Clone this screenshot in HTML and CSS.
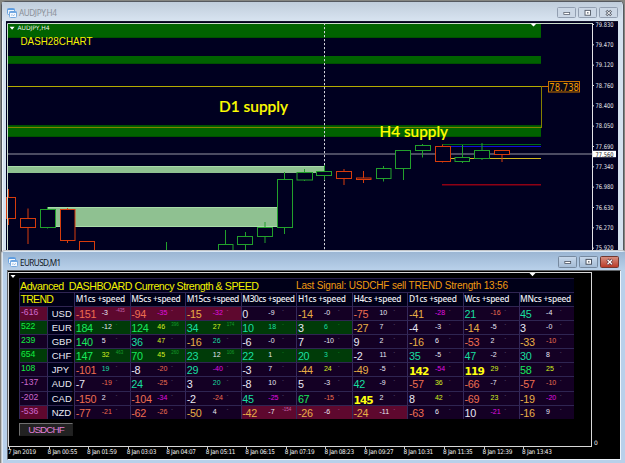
FILE: index.html
```html
<!DOCTYPE html>
<html lang="en">
<head>
<meta charset="utf-8">
<title>Charts</title>
<link rel="stylesheet" href="styles.css">
</head>
<body>
<svg width="0" height="0" class="defs">
  <symbol id="charticon" viewBox="0 0 10 10"><rect x=".5" y=".5" width="7" height="6" rx="1" fill="#eef5fd" stroke="#6aa3df"/><path d="M.5 1.3h7" stroke="#5b9be0" stroke-width="1.4"/><rect x="2.5" y="3.5" width="7" height="6" rx="1" fill="#f6faff" stroke="#78abdf"/><path d="M2.5 4.2h7" stroke="#5b9be0" stroke-width="1.3"/><path d="M4 7.5l1.2-1 1 1.2L8 6.4" fill="none" stroke="#8ab0d8" stroke-width=".8"/></symbol>
</svg>
<div class="window back">
  <header class="titlebar">
    <svg class="appicon"><use href="#charticon"/></svg><span class="caption">AUDJPY,H4</span>
    <div class="buttons">
      <b class="btn"><svg viewBox="0 0 18 10"><rect x="6" y="4.5" width="6" height="2" fill="#fff" stroke="#59616e" stroke-width=".8"/></svg></b>
      <b class="btn"><svg viewBox="0 0 18 10"><rect x="6.2" y="2.3" width="5.6" height="5" fill="#fff" stroke="#59616e"/><rect x="8.2" y="4.2" width="1.6" height="1.3" fill="#59616e"/></svg></b>
      <b class="btn"><svg viewBox="0 0 18 10"><path d="M6.5 2.5l5 5m0-5l-5 5" stroke="#59616e" stroke-width="2.6"/><path d="M6.7 2.7l4.6 4.6m0-4.6l-4.6 4.6" stroke="#fff" stroke-width="1"/></svg></b>
    </div>
  </header>
  <svg class="chart" id="chart" viewBox="6 21 612 230">
    <rect x="6" y="21" width="612" height="230" fill="#000020"/>
    <path d="M6 21.5h612" stroke="#14142c"/>
    <g fill="#006200"><rect x="8" y="24" width="533" height="13.8"/><rect x="8" y="56" width="533" height="7.5"/><rect x="8" y="125" width="533" height="11.7"/></g>
    <g fill="#005000"><rect x="8" y="37" width="533" height="1"/><rect x="8" y="63" width="533" height="1"/><rect x="8" y="125" width="533" height="1"/><rect x="8" y="136" width="533" height="1"/></g>
    <path d="M8 86.5H541" stroke="#b4ab00"/>
    <path d="M8 127.5H541.5" stroke="#858000"/><path d="M541.5 86V128" stroke="#858000"/>
    <path d="M542 86.5h6" stroke="#d07800"/>
    <path d="M8 154H592" stroke="#656579" stroke-width="1.7"/>
    <rect x="8" y="166" width="316.5" height="7" fill="#8fc191"/>
    <rect x="48" y="207" width="229" height="20" fill="#8fc191"/>
    <path d="M8 166.5H324M48 207.5H277M48 226.5H277" stroke="#a9dca9" stroke-width="1"/>
    <path d="M324.5 23V250" stroke="#d2d2da" stroke-dasharray="2.2 1.8"/>
    <path d="M442 144.5h99" stroke="#006c18"/><path d="M450 146.5h91" stroke="#1010d8"/><path d="M450 158.5h91" stroke="#d0b820"/><path d="M442 184.7h99" stroke="#8e0014" stroke-width="1.4"/>
    <g id="candles"></g>
    <path d="M7.5 250V23.5H592" fill="none" stroke="#ccdccc"/>
    <path d="M592.5 23V250" stroke="#e4e4e8"/>
    <path d="M9.6 26.8h5l-2.5 3zM530.5 23.5h6l-3 3z" fill="#fff"/>
    <text class="sym" x="17.5" y="30.3" textLength="32">AUDJPY,H4</text>
    <text class="dash" x="20.5" y="45.2" textLength="72" lengthAdjust="spacingAndGlyphs">DASH28CHART</text>
    <text class="zone" x="219" y="111.5" textLength="69" lengthAdjust="spacingAndGlyphs">D1 supply</text>
    <text class="zone" x="379.5" y="137" textLength="68.5" lengthAdjust="spacingAndGlyphs">H4 supply</text>
    <rect x="548.5" y="81.5" width="31" height="10.5" fill="#080818" stroke="#c47000"/>
    <text class="tag" x="549.3" y="91" textLength="29.6" lengthAdjust="spacingAndGlyphs">78.738</text>
    <g id="scale"></g>
    <rect x="593" y="150.8" width="23" height="6.4" fill="#fff"/><text class="ax now" x="595.5" y="156.5" textLength="18" lengthAdjust="spacingAndGlyphs">77.560</text>
  </svg>
</div>
<div class="window front">
  <header class="titlebar">
    <svg class="appicon"><use href="#charticon"/></svg><span class="caption">EURUSD,M1</span>
    <div class="buttons">
      <b class="btn"><svg viewBox="0 0 18 10"><rect x="6" y="4.5" width="6" height="2" fill="#fff" stroke="#464e5c" stroke-width=".8"/></svg></b>
      <b class="btn"><svg viewBox="0 0 18 10"><rect x="6.2" y="2.3" width="5.6" height="5" fill="#fff" stroke="#464e5c"/><rect x="8.2" y="4.2" width="1.6" height="1.3" fill="#464e5c"/></svg></b>
      <b class="btn close"><svg viewBox="0 0 18 10"><path d="M6.5 2.5l5 5m0-5l-5 5" stroke="#60333a" stroke-width="2.8"/><path d="M6.7 2.7l4.6 4.6m0-4.6l-4.6 4.6" stroke="#fff" stroke-width="1.3"/></svg></b>
    </div>
  </header>
  <main class="panel">
    <div class="plot">
      <svg class="marks" viewBox="0 0 584 5"><path d="M1.5 2h5l-2.5 3zM520.5 0h6l-3 3.2z" fill="#fff"/></svg>
      <div class="board">
        <div class="headline"><span class="name">Advanced &nbsp;DASHBOARD Currency Strength &amp; SPEED</span><span class="signal">Last Signal: USDCHF sell TREND Strength 13:56</span></div>
        <div class="grid" id="grid"></div>
      </div>
      <button class="pair">USDCHF</button>
    </div>
    <div class="zero">0</div>
    <div class="times" id="times"></div>
  </main>
</div>
<script src="script.js"></script>
</body>
</html>
```
FILE: styles.css
```css
*{box-sizing:border-box}
body{margin:0;width:625px;height:463px;overflow:hidden;position:relative;background:#858580;font-family:"Liberation Sans",sans-serif}
.defs{position:absolute}
.window{position:absolute;border:1px solid #55595f;display:flex;flex-direction:column}
.back{left:1px;top:1px;width:623px;height:260px;border-radius:4px 4px 0 0;background:#d5e2f0;padding:0 5px 0 4px;box-shadow:inset 1px 1px #f2f6fa}
.front{left:1px;top:250px;width:625px;height:216px;border-color:#c4c6c8;border-right:0;border-radius:4px 4px 0 0;background:#b8d0ea;padding:0 5px 0 5px;box-shadow:inset 1px 1px #dce9f6}
.titlebar{display:flex;align-items:center;flex:none}
.back .titlebar{height:19px;margin:0 -4px;padding:2px 4px 0 5px;background:linear-gradient(#c0cddb,#d8e4f1)}
.front .titlebar{height:18px;margin:1px -4px 0;padding:2px 6px 0 5px;background:linear-gradient(#9bb6d3,#b9d1ea)}
.appicon{width:10px;height:10px;margin-right:2px}
.caption{font:8.2px "Noto Sans",sans-serif;color:#8b9199;letter-spacing:-.45px}
.front .caption{color:#10161f;letter-spacing:-.6px}
.buttons{margin-left:auto;display:flex;gap:1.5px}
.btn{width:19.5px;height:11.5px;border:1px solid #929fb1;border-radius:1.5px;background:#cbd7e5;display:flex;align-items:center;justify-content:center}
.btn svg{width:17.5px;height:10px;flex:none}
.front .btn{background:linear-gradient(#c6d7ea,#a5bcd6);border-color:#76899f}
.front .btn.close{background:linear-gradient(#d58e80,#bb3c29);border-color:#72372f}
.chart{width:612px;height:230px;display:block;flex:none}
.dash{font-size:11px;fill:#f3f300}
.sym{font:6px "DejaVu Sans",sans-serif;fill:#e8f4e8}
.zone{font:500 15.8px Lato,sans-serif;fill:#ffff00;stroke:#ffff00;stroke-width:.2px}
.tag{font:10.5px "DejaVu Sans",sans-serif;fill:#f09800}
.ax{font:6.5px "DejaVu Sans",sans-serif;fill:#e4e4ea}
.ax.now{fill:#222}
.panel{flex:none;height:190px;background:#000;border:1px solid #606468;border-right-color:#eef4fa;border-bottom-color:#eef4fa;display:grid;grid-template-columns:584px 1fr;grid-template-rows:176px 1fr}
.plot{border:1px solid #d8d8d8;margin-top:1px}
.marks{display:block;width:584px;height:5px}
.board{margin-left:10px;width:555px}
.headline{height:14px;display:flex;background:#000018;border-top:1px solid #251e46;border-left:1px solid #251e46;white-space:nowrap;align-items:center}
.name{color:#f2f200;width:276px;font-size:10.7px;letter-spacing:-.48px}
.signal{color:#f09a10;font-size:10px;letter-spacing:-.18px}
.grid{display:grid;grid-template-columns:27.7px 27.5px repeat(9,55.55px);grid-template-rows:14px repeat(8,14.1px)}
.cell,.head,.trend,.cur{border-top:1px solid #2f2552;border-left:1px solid #34285a;background:#140024;white-space:nowrap;overflow:hidden}
.head{background:#000018;color:#eeeef2;font:500 8.4px/12px "Noto Sans",sans-serif;padding-left:.5px;letter-spacing:-.22px;overflow:visible}
.head.tight{letter-spacing:-.36px}
.head.first{color:#f2f200;font:10.5px/12.5px "Liberation Sans",sans-serif;letter-spacing:-.7px;grid-column:span 2}
.trend{font-size:8.6px;line-height:11px;padding-left:1px;color:#ce68ce}
.cur{font-size:9.5px;line-height:14.5px;background:#00001a;color:#eaeaf4;padding-left:4px;border-right:2px solid #03000a}
.trend.up{color:#12ee40}
.cell{display:grid;grid-template-columns:26px 14px 1fr;padding-left:.5px}
.cell .v{font-size:10.8px;line-height:14px;letter-spacing:-.3px}
.cell .s{font-size:7px;line-height:11px}
.cell .t{font-size:4.5px;line-height:7px;color:#77738e}
.cell .v.big{font:bold 10.6px/16px "DejaVu Sans",sans-serif;letter-spacing:-.9px}
.green{background:#003b08}
.red{background:#5e082e}
.green .t{color:#169c2b}
.red .t{color:#c665ae}
.w{color:#e8e8f4}
.o{color:#e8ae46}
.r{color:#ee6e50}
.g{color:#18e85c}
.c{color:#18dfa0}
.y{color:#d4f020}
.m{color:#e010e0}
.yy{color:#ffff10}
.pair{display:block;margin:4px 0 0 10px;width:54px;height:13px;padding:0;border:1px solid #202020;border-top-color:#707070;border-left-color:#707070;background:#222;color:#e080d8;font:9.4px/11px "Liberation Sans",sans-serif;letter-spacing:-.9px}
.pair{letter-spacing:-.95px;font-size:9.9px}
.zero{align-self:end;padding:0 0 0 2px;font:6px/8px "DejaVu Sans",sans-serif;color:#eee}
.times{grid-column:span 2;display:grid;grid-template-columns:repeat(14,39.55px);color:#f0f0f0;font:6.4px/10px "DejaVu Sans Condensed","DejaVu Sans",sans-serif;letter-spacing:-.3px;white-space:nowrap}
.times span{background:linear-gradient(#ccc,#ccc) 1px 0/1px 2px no-repeat}
```
FILE: script.js
```js
const NS = 'http://www.w3.org/2000/svg';
const add = (parent, tag, attrs, text) => {
  const n = document.createElementNS(NS, tag);
  for (const k in attrs) n.setAttribute(k, attrs[k]);
  if (text) n.textContent = text;
  parent.appendChild(n);
};

// left, right, body top, body bottom, wick x, wick top, wick bottom, rising
const candles = [
  [6.5,15.5,197.5,218.5,8.5,189,225,0],[20.5,35.5,218.5,227.5,28,208.5,244,0],
  [40.5,55.5,209.5,227.5,47.5,207,228.5,1],[60.5,75,209.5,240.5,67.5,208,243,0],
  [79.5,94.5,241.5,256,87,241,256,0],[218.5,233,244.5,256,225.5,230,256,1],
  [237.5,252.5,236.5,244.5,245.5,232,251,1],[257.5,272.5,227.5,236.5,265,222,243,1],
  [277.5,292.5,179.5,227.5,284.5,172,234,1],[297,312.5,172.5,180,304.5,169,181,1],
  [316.5,331.5,171.5,175.5,324.5,165,180,1],[336.5,351.5,171.5,178.5,344,169,185,0],
  [356.5,371,178,179.5,363.5,171,183,0],[376.5,391,168.5,178.5,383.5,166,181.5,1],
  [395.5,410.5,150.5,168.5,403.5,150,180,1],[415.5,430.5,145.5,150.5,422.5,144,157.5,1],
  [435.5,450.5,146.5,161.5,442.5,144.5,162.5,0],[455,469.5,157.5,161.5,462.5,145,163,1],
  [474.5,489.5,150.5,158.5,482,143,160,1],[494.5,509.5,150.5,154.5,502,150,162,0]
];
const cg = document.getElementById('candles');
for (const [l, r, t, b, x, wt, wb, up] of candles) {
  const stroke = up ? '#22a02c' : '#d63c0c';
  add(cg, 'path', {d: `M${x} ${wt}V${wb}`, stroke});
  add(cg, 'rect', {x: l, y: t, width: r - l, height: b - t, stroke, fill: '#000020'});
}
add(cg, 'path', {d: 'M166.5 242V251', stroke: '#22a02c'});

const scale = document.getElementById('scale');
['79.830','79.470','79.120','78.760','78.400','78.050','77.690','77.340','76.980','76.630','76.270','75.920'].forEach((p, i) => {
  const y = 24.5 + i * 20.33;
  add(scale, 'path', {d: `M592 ${y}h2`, stroke: '#ddd'});
  add(scale, 'text', {class: 'ax', x: 595.5, y: y + 2.2, textLength: 18, lengthAdjust: 'spacingAndGlyphs'}, p);
});

// trend | currency | value,speed,extra,background per timeframe
const rows = [
  '-616 red|USD|-151r,-3w,-435,red|-94r,-35m,-,red|-15o,-32m,-,red|0w,-9w|-14o,-0w|-75r,10w|-41o,-28m|21c,-16r|45c,-4w',
  '522 green|EUR|184g,-12w,-,green|124g,46y,396,green|34c,27y,174,green|10c,18c,-,green|3w,6c,-,green|-27o,7w|-4w,-3w|-14o,-5w|3w,-0w',
  '239|GBP|140g,5w|36c,47y|-16o,26c|-6w,-0w|7w,-10w|9w,2w|-16o,6w|-53r,2w|-33o,-10r',
  '654 green|CHF|147g,32y,463,green|70g,45y,260,green|23c,12w,106,green|22c,1w,-,green|20c,3c,-,green|-2w,11w|35c,-5w|47c,-2w|30c,8w',
  '108|JPY|-101r,19c|-8w,-20r|29c,-40m|-3w,7w|-44o,24y|-49o,-5w|142yy,-54m|119yy,29y|58g,25y',
  '-137|AUD|-7w,-19r|24c,-25r|3w,20c|-8w,10w|5w,-3w|42c,-9w|-57r,36y|-66r,-7w|-57r,-10r',
  '-202|CAD|-150r,2w|-104r,-34m|-2w,-24r|45c,-25m|67g,-15r|145yy,2w|8w,42y|-69r,23y|-19o,-20m',
  '-536 red|NZD|-77r,-21r|-62r,-26r|-50o,4w|-42o,-7w,-154,red|-26o,-6w,-,red|-24o,-11w,-,red|-63r,6w|10w,-21m|-16o,9w'
];
let html = '<div class="head first">TREND</div>' +
  ['M1','M5','M15','M30','H1','H4','D1','W','MN'].map(h => `<div class="head${h.length > 2 ? ' tight' : ''}">${h}cs +speed</div>`).join('');
const part = s => s.match(/^(-?\d+)([a-z]+)$/);
for (const row of rows) {
  const [trend, cur, ...cells] = row.split('|');
  const [n, bg = ''] = trend.split(' ');
  html += `<div class="trend ${bg} ${n > 0 ? 'up' : ''}">${n}</div><div class="cur">${cur}</div>`;
  for (const c of cells) {
    const [v, s, t = '-', b = ''] = c.split(',');
    const [, vn, vc] = part(v), [, sn, sc] = part(s);
    html += `<div class="cell ${b}"><span class="v ${vc}${vc === 'yy' ? ' big' : ''}">${vn}</span><span class="s ${sc}">${sn}</span><span class="t">${t}</span></div>`;
  }
}
document.getElementById('grid').innerHTML = html;

document.getElementById('times').innerHTML =
  ['7 Jan 2019','8 Jan 00:55','8 Jan 01:59','8 Jan 03:03','8 Jan 04:07','8 Jan 05:11','8 Jan 06:15','8 Jan 07:19','8 Jan 08:23','8 Jan 09:27','8 Jan 10:31','8 Jan 11:35','8 Jan 12:39','8 Jan 13:43']
  .map(t => `<span>${t}</span>`).join('');
```
